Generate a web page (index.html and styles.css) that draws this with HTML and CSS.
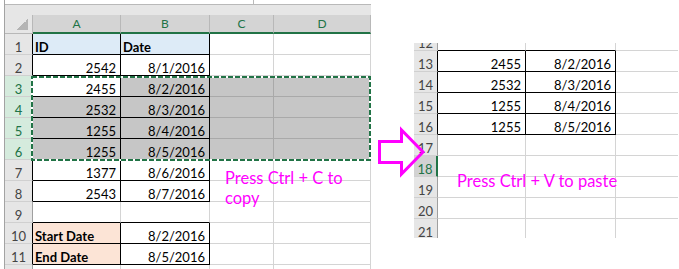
FILE: index.html
```html
<!DOCTYPE html>
<html lang="en">

<head>
    <meta charset="UTF-8">
    <meta name="viewport" content="width=device-width, initial-scale=1.0">
    <title>Copy and paste a range</title>
    <link rel="stylesheet" href="styles.css">
</head>

<body>
    <!-- source sheet -->
    <div class="sheet-left">
        <div class="formula-bar"><span class="fx-left"></span><span class="fx-right"></span></div>
        <div class="band"></div>
        <div class="grid grid-left">
            <div class="corner"></div>
            <div class="colhead">A</div>
            <div class="colhead">B</div>
            <div class="colhead">C</div>
            <div class="colhead">D</div>

            <div class="rh bl">1</div>
            <div class="c bx b blue">ID</div>
            <div class="c bx b blue">Date</div>
            <div class="c"></div>
            <div class="c"></div>

            <div class="rh bl">2</div>
            <div class="c bx num">2542</div>
            <div class="c bx num">8/1/2016</div>
            <div class="c"></div>
            <div class="c"></div>

            <div class="rh sel">3</div>
            <div class="c bx num">2455</div>
            <div class="c bx num sel">8/2/2016</div>
            <div class="c sel"></div>
            <div class="c sel"></div>

            <div class="rh sel">4</div>
            <div class="c bx num sel">2532</div>
            <div class="c bx num sel">8/3/2016</div>
            <div class="c sel"></div>
            <div class="c sel"></div>

            <div class="rh sel">5</div>
            <div class="c bx num sel">1255</div>
            <div class="c bx num sel">8/4/2016</div>
            <div class="c sel"></div>
            <div class="c sel"></div>

            <div class="rh sel">6</div>
            <div class="c bx num sel">1255</div>
            <div class="c bx num sel">8/5/2016</div>
            <div class="c sel"></div>
            <div class="c sel"></div>

            <div class="rh bl">7</div>
            <div class="c bx num">1377</div>
            <div class="c bx num">8/6/2016</div>
            <div class="c"></div>
            <div class="c"></div>

            <div class="rh bl">8</div>
            <div class="c bx num">2543</div>
            <div class="c bx num">8/7/2016</div>
            <div class="c"></div>
            <div class="c"></div>

            <div class="rh">9</div>
            <div class="c bb"></div>
            <div class="c bb"></div>
            <div class="c"></div>
            <div class="c"></div>

            <div class="rh bl">10</div>
            <div class="c bx b peach">Start Date</div>
            <div class="c bx num">8/2/2016</div>
            <div class="c"></div>
            <div class="c"></div>

            <div class="rh bl">11</div>
            <div class="c bx b peach">End Date</div>
            <div class="c bx num">8/5/2016</div>
            <div class="c"></div>
            <div class="c"></div>

            <div class="rh">12</div>
            <div class="c"></div>
            <div class="c"></div>
            <div class="c"></div>
            <div class="c"></div>
        </div>
    </div>

    <!-- target sheet, scrolled down to row 12 -->
    <div class="sheet-right">
        <div class="grid grid-right">
            <div class="rh">12</div>
            <div class="c bb"></div>
            <div class="c bb"></div>
            <div class="c last"></div>

            <div class="rh bl">13</div>
            <div class="c bx num">2455</div>
            <div class="c bx num">8/2/2016</div>
            <div class="c last"></div>

            <div class="rh bl">14</div>
            <div class="c bx num">2532</div>
            <div class="c bx num">8/3/2016</div>
            <div class="c last"></div>

            <div class="rh bl">15</div>
            <div class="c bx num">1255</div>
            <div class="c bx num">8/4/2016</div>
            <div class="c last"></div>

            <div class="rh bl">16</div>
            <div class="c bx num">1255</div>
            <div class="c bx num">8/5/2016</div>
            <div class="c last"></div>

            <div class="rh">17</div>
            <div class="c"></div>
            <div class="c"></div>
            <div class="c last"></div>

            <div class="rh act">18</div>
            <div class="c"></div>
            <div class="c"></div>
            <div class="c last"></div>

            <div class="rh">19</div>
            <div class="c"></div>
            <div class="c"></div>
            <div class="c last"></div>

            <div class="rh">20</div>
            <div class="c"></div>
            <div class="c"></div>
            <div class="c last"></div>

            <div class="rh">21</div>
            <div class="c"></div>
            <div class="c"></div>
            <div class="c last"></div>
        </div>
    </div>

    <!-- copy marquee and arrow drawn on top -->
    <svg class="overlay" width="679" height="269" viewBox="0 0 679 269">
        <rect x="32" y="77" width="338" height="83" fill="none" stroke="#fff" stroke-width="2" />
        <rect x="32" y="77" width="338" height="83" fill="none" stroke="#217346" stroke-width="2"
            stroke-dasharray="5 2" />
        <path d="M379.5 141.5 H401.5 V130 L423 152 L401.5 174 V162.5 H379.5 Z" fill="none" stroke="#ff00ff"
            stroke-width="3" />
    </svg>

    <div class="note note-copy">Press Ctrl + C to copy</div>
    <div class="note note-paste">Press Ctrl + V to paste</div>
</body>

</html>
```

FILE: styles.css
```css
* {
    box-sizing: border-box;
}

body {
    margin: 0;
    width: 679px;
    height: 269px;
    overflow: hidden;
    position: relative;
    display: flex;
    align-items: flex-start;
    background: #fff;
    font-family: Lato, "Liberation Sans", sans-serif;
    font-size: 13px;
    color: #000;
}

/* left window */
.sheet-left {
    margin-left: 4px;
    border-left: 1px solid #a3a3a3;
    width: 367px;
    height: 269px;
}

.formula-bar {
    display: flex;
    height: 5px;
    border-bottom: 1px solid #b9b9b9;
}

.fx-left {
    width: 249px;
    border-right: 1px solid #b9b9b9;
}

.band {
    height: 10px;
    background: #e6e6e6;
}

.grid {
    display: grid;
    grid-auto-rows: 21px;
}

.grid-left {
    grid-template-columns: 28px 88px 89px 64px 97px;
    grid-template-rows: 19px;
}

.corner {
    background: #e6e6e6 linear-gradient(135deg, transparent 50%, #b4b4b4 50%) no-repeat right 4px bottom 3px / 11px 11px;
    border-right: 1px solid #b8b8b8;
    border-bottom: 1px solid #b8b8b8;
}

.colhead {
    background: #d4d4d4;
    color: #217346;
    font-size: 12px;
    text-align: center;
    line-height: 17px;
    border-right: 1px solid #b8b8b8;
    border-bottom: 2px solid #217346;
}

/* row numbers */
.rh {
    background: #e6e6e6;
    color: #444;
    text-align: center;
    padding-top: 5px;
    line-height: 16px;
    border-right: 1px solid #9f9f9f;
    border-bottom: 1px solid #d0d0d0;
}

.rh.bl {
    border-right-color: #000;
}

.rh.sel {
    background: #d5ebdd;
    color: #217346;
}

.rh.act {
    background: #d2d2d2;
    color: #217346;
    border-right: 2px solid #217346;
}

/* cells */
.c {
    padding: 5px 4px 0 2px;
    line-height: 16px;
    white-space: nowrap;
    overflow: hidden;
    border-right: 1px solid #d4d4d4;
    border-bottom: 1px solid #d4d4d4;
}

.c.sel {
    background: #c6c6c6;
    border-color: #a9a9a9;
}

.c.bx {
    border-right-color: #000;
    border-bottom-color: #000;
}

.c.bb {
    border-bottom-color: #000;
}

.c.last {
    border-right: 0;
}

.num {
    text-align: right;
}

.b {
    font-weight: bold;
}

.blue {
    background: #ddebf7;
}

.peach {
    background: #fce4d6;
}

/* right window */
.sheet-right {
    margin: 43px 0 0 43px;
    width: 264px;
    height: 195px;
    overflow: hidden;
}

.grid-right {
    grid-template-columns: 24px 88px 90px 62px;
    margin-top: -13px;
}

.overlay {
    position: absolute;
    left: 0;
    top: 0;
    pointer-events: none;
}

.note {
    position: absolute;
    color: #ff00ff;
    font-size: 16.5px;
    line-height: 20px;
}

.note-copy {
    left: 225px;
    top: 168px;
    width: 124px;
}

.note-paste {
    left: 457px;
    top: 171px;
    white-space: nowrap;
}
```
